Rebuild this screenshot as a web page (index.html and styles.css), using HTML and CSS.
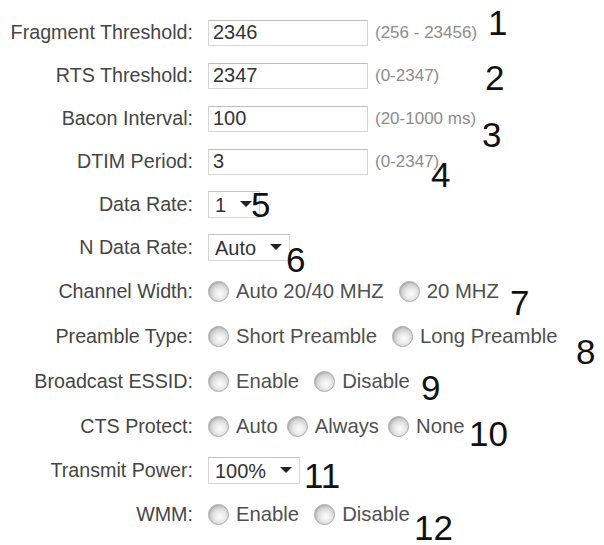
FILE: index.html
```html
<!DOCTYPE html>
<html lang="en">
<head>
  <meta charset="UTF-8" />
  <title>Wireless Advanced Settings</title>
  <link rel="stylesheet" href="styles.css">
</head>
<body>
  <div class="form">
    <div class="row">
      <label class="label">Fragment Threshold:</label>
      <input class="text" type="text" value="2346">
      <span class="hint">(256 - 23456)</span>
    </div>
    <div class="row">
      <label class="label">RTS Threshold:</label>
      <input class="text" type="text" value="2347">
      <span class="hint">(0-2347)</span>
    </div>
    <div class="row">
      <label class="label">Bacon Interval:</label>
      <input class="text" type="text" value="100">
      <span class="hint">(20-1000 ms)</span>
    </div>
    <div class="row">
      <label class="label">DTIM Period:</label>
      <input class="text" type="text" value="3">
      <span class="hint">(0-2347)</span>
    </div>
    <div class="row">
      <label class="label">Data Rate:</label>
      <span class="select"><select><option>1</option></select></span>
    </div>
    <div class="row">
      <label class="label">N Data Rate:</label>
      <span class="select"><select><option>Auto</option></select></span>
    </div>
    <div class="row radios">
      <label class="label">Channel Width:</label>
      <label class="opt"><input type="radio" name="cw">Auto 20/40 MHZ</label>
      <label class="opt"><input type="radio" name="cw">20 MHZ</label>
    </div>
    <div class="row radios">
      <label class="label">Preamble Type:</label>
      <label class="opt"><input type="radio" name="pt">Short Preamble</label>
      <label class="opt"><input type="radio" name="pt">Long Preamble</label>
    </div>
    <div class="row radios">
      <label class="label">Broadcast ESSID:</label>
      <label class="opt"><input type="radio" name="be">Enable</label>
      <label class="opt"><input type="radio" name="be">Disable</label>
    </div>
    <div class="row radios">
      <label class="label">CTS Protect:</label>
      <label class="opt tight"><input type="radio" name="cts">Auto</label>
      <label class="opt tight"><input type="radio" name="cts">Always</label>
      <label class="opt tight"><input type="radio" name="cts">None</label>
    </div>
    <div class="row">
      <label class="label">Transmit Power:</label>
      <span class="select"><select><option>100%</option></select></span>
    </div>
    <div class="row radios">
      <label class="label">WMM:</label>
      <label class="opt"><input type="radio" name="wmm">Enable</label>
      <label class="opt"><input type="radio" name="wmm">Disable</label>
    </div>

    <!-- callout numbers -->
    <span class="mark m1">1</span>
    <span class="mark m2">2</span>
    <span class="mark m3">3</span>
    <span class="mark m4">4</span>
    <span class="mark m5">5</span>
    <span class="mark m6">6</span>
    <span class="mark m7">7</span>
    <span class="mark m8">8</span>
    <span class="mark m9">9</span>
    <span class="mark m10">10</span>
    <span class="mark m11">11</span>
    <span class="mark m12">12</span>
  </div>
</body>
</html>
```

FILE: styles.css
```css
body { margin: 0; background: #fff; font-family: "Liberation Sans", Arial, sans-serif; color: #454545; }
.form { position: relative; padding-top: 11px; width: 604px; height: 534px; }
.row { display: flex; align-items: center; height: 43px; }
.row.radios { height: 45px; }
.label { width: 193px; margin-right: 15px; text-align: right; font-size: 19.7px; white-space: nowrap; flex-shrink: 0; }
.text {
  box-sizing: border-box;
  width: 160px;
  height: 26px;
  padding: 0 4px;
  border: 1px solid #d6d6d6;
  border-top-color: #bdbdbd;
  font: 20px "Liberation Sans", Arial, sans-serif;
  color: #333;
  margin: 0;
}
.hint { margin-left: 7px; font-size: 17px; color: #8c8c8c; }

.select { position: relative; display: inline-block; }
.select select {
  appearance: none;
  -webkit-appearance: none;
  box-sizing: border-box;
  height: 27px;
  margin: 0;
  padding: 0 32px 0 6px;
  border: 1px solid #d6d6d6;
  border-top-color: #c4c4c4;
  background: #fff;
  font: 20px "Liberation Sans", Arial, sans-serif;
  color: #333;
}
.select::after {
  content: "";
  position: absolute;
  right: 8px;
  top: 10px;
  border-left: 6px solid transparent;
  border-right: 6px solid transparent;
  border-top: 6px solid #222;
}

.opt { display: inline-flex; align-items: center; font-size: 20.3px; color: #505050; margin-right: 15px; white-space: nowrap; }
.opt.tight { margin-right: 9px; }
.opt input {
  appearance: none;
  -webkit-appearance: none;
  box-sizing: border-box;
  width: 21px;
  height: 21px;
  margin: 0 7px 0 0;
  border-radius: 50%;
  border: 1px solid #a9a9a9;
  background: radial-gradient(circle at 58% 62%, #fdfdfd 0, #ececec 30%, #cdcdcd 62%, #b2b2b2 100%);
  box-shadow: inset 1px 1px 1px rgba(0, 0, 0, 0.12);
}

.mark { position: absolute; font-size: 35px; line-height: 0.85; color: #111; }
.m1 { left: 488px; top: 8px; }
.m2 { left: 485px; top: 63px; }
.m3 { left: 482px; top: 120px; }
.m4 { left: 431px; top: 160px; }
.m5 { left: 251px; top: 190px; }
.m6 { left: 286px; top: 245px; }
.m7 { left: 510px; top: 288px; }
.m8 { left: 576px; top: 337px; }
.m9 { left: 421px; top: 373px; }
.m10 { left: 469px; top: 419px; }
.m11 { left: 304px; top: 461px; }
.m12 { left: 414px; top: 513px; }
```
